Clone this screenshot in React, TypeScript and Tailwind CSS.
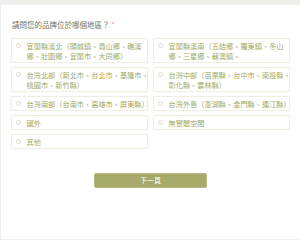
import React from "react";

const font = { fontFamily: '"Noto Sans CJK TC", "Noto Sans", sans-serif' };

function Opt({ lines }: { lines: string[] }) {
  return (
    <div className="flex items-start min-h-[15px] border border-[#efeee2] rounded-[2px] bg-white py-[1.5px] pl-[4px] pr-[2px] shadow-[0_0_1px_rgba(210,210,185,0.35)]">
      <span className="mt-[2.5px] w-[5px] h-[5px] rounded-full border border-[#dcdccd] shrink-0" />
      <span className="ml-[5.5px] text-[7.2px] leading-[10px] text-[#a0a965] whitespace-nowrap">
        {lines.map((l, i) => (
          <span key={i} className="block">
            {l}
          </span>
        ))}
      </span>
    </div>
  );
}

export default function App() {
  return (
    <div className="w-[300px] h-[240px] bg-[#eeeeea] pt-[5px] pl-[1px] pb-[1px]" style={font}>
      <div className="h-full bg-white flex flex-col px-[10px] pt-[15px]">
        <div className="pl-[1px] text-[7.5px] leading-[10px] text-[#74745f]">
          請問您的品牌位於哪個地區？
          <span className="text-[#d98a8a] ml-[2px] text-[6px] align-top">*</span>
        </div>
        <div className="mt-[8px] grid grid-cols-2 gap-x-[5px] gap-y-[4px]">
          <Opt lines={["宜蘭縣溪北（頭城鎮、員山鄉、礁溪", "鄉、壯圍鄉、宜蘭市、大同鄉）"]} />
          <Opt lines={["宜蘭縣溪南（五結鄉、羅東鎮、冬山", "鄉、三星鄉、蘇澳鎮、"]} />
          <Opt lines={["台灣北部（新北市、台北市、基隆市、", "桃園市、新竹縣）"]} />
          <Opt lines={["台灣中部（苗栗縣、台中市、南投縣、", "彰化縣、雲林縣）"]} />
          <Opt lines={["台灣南部（台南市、高雄市、屏東縣）"]} />
          <Opt lines={["台灣外島（澎湖縣、金門縣、連江縣）"]} />
          <Opt lines={["國外"]} />
          <Opt lines={["無實體空間"]} />
          <Opt lines={["其他"]} />
        </div>
        <div className="mt-[24px] flex justify-center">
          <button className="w-[113px] h-[15px] rounded-[2px] bg-[#a5aa68] border border-[#b6ba82] text-white text-[7px] leading-[13px]">
            下一頁
          </button>
        </div>
      </div>
    </div>
  );
}
